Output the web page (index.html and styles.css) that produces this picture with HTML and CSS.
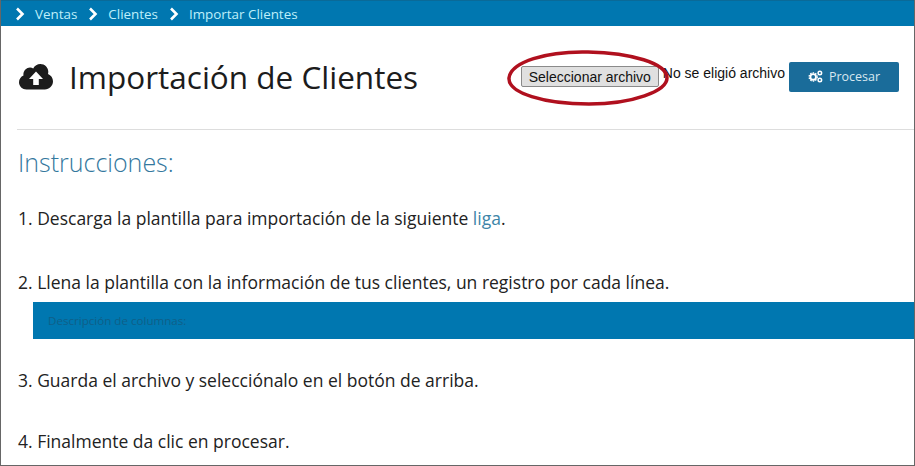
FILE: index.html
```html
<!DOCTYPE html>
<html lang="es">
<head>
  <meta charset="UTF-8">
  <meta name="viewport" content="width=device-width, initial-scale=1.0">
  <title>Importación de Clientes</title>
  <link rel="stylesheet" href="styles.css">
</head>
<body>
  <div class="frame">
    <nav class="breadcrumb">
      <svg class="chevron" viewBox="0 0 10 14"><path d="M2 1.5 7.5 7 2 12.5" /></svg>
      <a>Ventas</a>
      <svg class="chevron" viewBox="0 0 10 14"><path d="M2 1.5 7.5 7 2 12.5" /></svg>
      <a>Clientes</a>
      <svg class="chevron" viewBox="0 0 10 14"><path d="M2 1.5 7.5 7 2 12.5" /></svg>
      <a>Importar Clientes</a>
    </nav>

    <header class="page-header">
      <div class="page-title">
        <svg class="cloud-icon" viewBox="0 0 34 26">
          <path d="M7.5 25.5C3.4 25.5 0 22.4 0 18.3c0-3 1.8-5.6 4.5-6.7-.1-.4-.1-.8-.1-1.200 0-4 3.200-6.900 6.600-6.900 1.200 0 2.300.3 3.200.9C15.700 1.800 18.300 0 21.300 0c4.500 0 8 3.500 8 7.800 0 .7-.1 1.400-.3 2.100 2.900 1.200 5 4 5 7.400 0 4.500-3.700 8.200-8.200 8.200Z" fill="#1c1c1c" />
          <path d="M17 7.500 24 15h-4.200v6h-5.600v-6H10Z" fill="#fff" />
        </svg>
        <h1>Importación de Clientes</h1>
      </div>
      <div class="upload-actions">
        <div class="file-field">
          <button class="file-btn">Seleccionar archivo</button>
          <span class="file-name">No se eligió archivo</span>
          <svg class="circle-mark" viewBox="0 0 164 58">
            <path d="M82 3C40 2 5 13 3 29c-1 15 35 26 80 26 44 0 78-13 78-26C161 14 125 4 82 3Z" />
          </svg>
        </div>
        <button class="process-btn">
          <svg class="gears-icon" viewBox="0 0 16 14">
            <circle class="gear-teeth" cx="5.5" cy="7.5" r="4.4" />
            <circle class="gear-ring" cx="5.5" cy="7.5" r="3" />
            <circle class="gear-small" cx="12.7" cy="3.2" r="1.9" />
            <circle class="gear-small" cx="12.7" cy="10.8" r="1.9" />
          </svg>
          Procesar
        </button>
      </div>
    </header>

    <main class="content">
      <h2>Instrucciones:</h2>
      <p class="step step-first">1. Descarga la plantilla para importación de la siguiente <a class="link">liga</a>.</p>
      <p class="step step-second">2. Llena la plantilla con la información de tus clientes, un registro por cada línea.</p>
      <div class="columns-bar">Descripción de columnas:</div>
      <p class="step step-third">3. Guarda el archivo y selecciónalo en el botón de arriba.</p>
      <p class="step step-fourth">4. Finalmente da clic en procesar.</p>
    </main>
  </div>
</body>
</html>
```

FILE: styles.css
```css
* {
  box-sizing: border-box;
}

html, body {
  margin: 0;
  padding: 0;
  overflow: hidden;
}

body {
  font-family: "Open Sans", sans-serif;
  color: #222;
  background-color: #fff;
}

.frame {
  width: 915px;
  height: 466px;
  border: 1px solid #666;
  border-top: none;
  overflow: hidden;
}

.breadcrumb {
  display: flex;
  align-items: center;
  height: 26px;
  padding-left: 14px;
  background-color: #0077b0;
  border-top: 1px solid #0a6a98;
  color: #bfeffa;
  font-size: 13.4px;
}

.breadcrumb a {
  margin: 0 11px 0 10px;
}

.chevron {
  width: 10px;
  height: 14px;
}

.chevron path {
  fill: none;
  stroke: #fff;
  stroke-width: 2.6;
}

.page-header {
  display: flex;
  justify-content: space-between;
  align-items: center;
  height: 104px;
  margin-left: 16px;
  padding: 0 15px 2px 2px;
  border-bottom: 1px solid #ddd;
}

.page-title {
  display: flex;
  align-items: center;
}

.cloud-icon {
  width: 34px;
  height: 26px;
  margin-right: 16px;
}

h1 {
  margin: 0;
  font-size: 31.5px;
  font-weight: 400;
  color: #1c1c1c;
}

.upload-actions {
  display: flex;
  align-items: center;
}

.file-field {
  position: relative;
  display: flex;
  align-items: center;
  margin-right: 4px;
}

.file-btn {
  width: 138px;
  height: 21px;
  padding: 0;
  border: 1px solid #8a8a8a;
  border-radius: 2px;
  background-color: #e0e0e0;
  color: #111;
  font-family: "Liberation Sans", sans-serif;
  font-size: 14px;
}

.file-name {
  margin: -7px 0 0 4px;
  font-family: "Liberation Sans", sans-serif;
  font-size: 14px;
  color: #111;
}

.circle-mark {
  position: absolute;
  left: -15px;
  top: -17px;
  width: 164px;
  height: 58px;
}

.circle-mark path {
  fill: none;
  stroke: #b0101e;
  stroke-width: 3.5;
}

.process-btn {
  display: flex;
  align-items: center;
  justify-content: center;
  width: 110px;
  height: 30px;
  border: none;
  border-radius: 2px;
  background-color: #1a6c9a;
  color: #d8e8f0;
  font-family: "Open Sans", sans-serif;
  font-size: 12.5px;
}

.gears-icon {
  width: 15px;
  height: 13px;
  margin-right: 6px;
}

.gear-teeth {
  fill: none;
  stroke: #fff;
  stroke-width: 1.4;
  stroke-dasharray: 1.6 1.2;
}

.gear-ring {
  fill: none;
  stroke: #fff;
  stroke-width: 2;
}

.gear-small {
  fill: none;
  stroke: #fff;
  stroke-width: 1.6;
}

.content {
  margin-left: 17px;
}

h2 {
  margin: 16px 0 0;
  font-size: 25px;
  line-height: 33px;
  font-weight: 300;
  color: #34789e;
}

.step {
  margin: 0;
  font-size: 17.5px;
  line-height: 24px;
  color: #222;
}

.step-first {
  margin-top: 27px;
}

.step-second {
  margin-top: 40px;
}

.step-third {
  margin-top: 29px;
}

.step-fourth {
  margin-top: 37px;
}

.link {
  color: #3d85a8;
}

.columns-bar {
  display: flex;
  align-items: center;
  height: 37px;
  margin: 8px 0 0 15px;
  padding-left: 15px;
  background-color: #0077b0;
  color: #0f5f88;
  font-size: 11.6px;
}
```
